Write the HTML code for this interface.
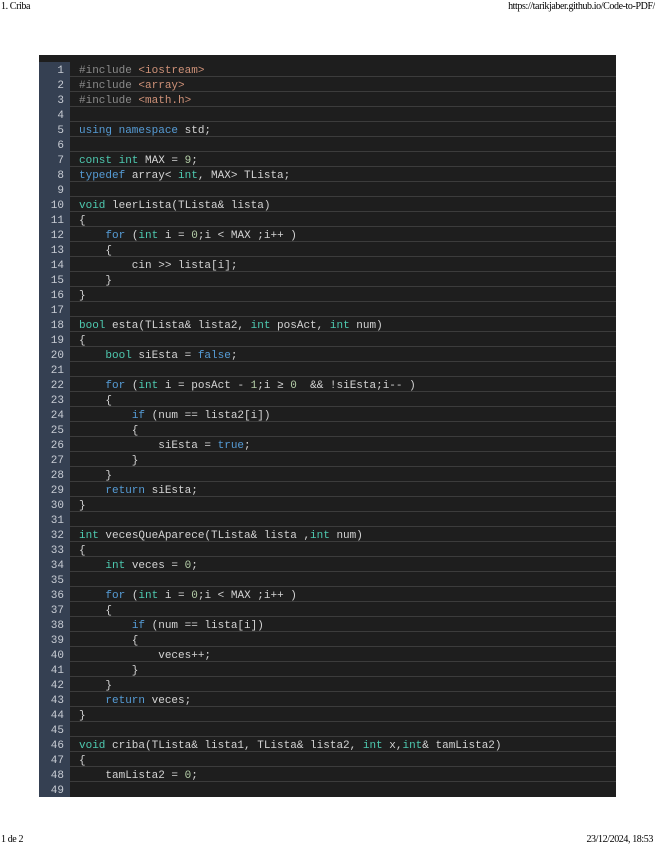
<!DOCTYPE html>
<html><head><meta charset="utf-8"><style>
body{margin:0;width:655px;height:848px;background:#fff;position:relative;overflow:hidden;font-family:"Liberation Serif",serif;}
.hd{position:absolute;font-size:10px;color:#000;letter-spacing:-0.4px}
.box{position:absolute;left:39px;top:55px;width:577px;height:742px;background:#1e1e1e;padding-top:7px;box-sizing:border-box}
.r{height:15px;display:flex;border-bottom:1px solid #3c3c3c;box-sizing:border-box;font-family:"Liberation Mono","DejaVu Sans Mono",monospace;font-size:11px;line-height:15px;color:#d4d4d4;white-space:pre}
.r:last-child{border-bottom:none}
.n{width:31px;background:#354052;color:#c8ccd4;text-align:right;padding-right:6px;box-sizing:border-box;flex:none}
.n,.c{position:relative;top:2px}
.n{top:0;padding-top:2px;height:15px;line-height:15px}
.c{padding-left:9px}
.k{color:#569cd6}.t{color:#4ec9b0}.p{color:#8a8a8a}.s{color:#ce9178}.m{color:#b5cea8}
</style></head><body>
<div class="hd" style="left:1px;top:1px">1. Criba</div>
<div class="hd" style="right:0;top:1px">https://tarikjaber.github.io/Code-to-PDF/</div>
<div class="hd" style="left:1px;top:834px">1 de 2</div>
<div class="hd" style="right:2px;top:834px">23/12/2024, 18:53</div>
<div class="box">
<div class="r"><div class="n">1</div><div class="c"><span class="p">#include </span><span class="s">&lt;iostream&gt;</span></div></div>
<div class="r"><div class="n">2</div><div class="c"><span class="p">#include </span><span class="s">&lt;array&gt;</span></div></div>
<div class="r"><div class="n">3</div><div class="c"><span class="p">#include </span><span class="s">&lt;math.h&gt;</span></div></div>
<div class="r"><div class="n">4</div><div class="c"></div></div>
<div class="r"><div class="n">5</div><div class="c"><span class="k">using namespace</span> std;</div></div>
<div class="r"><div class="n">6</div><div class="c"></div></div>
<div class="r"><div class="n">7</div><div class="c"><span class="t">const int</span> MAX = <span class="m">9</span>;</div></div>
<div class="r"><div class="n">8</div><div class="c"><span class="k">typedef</span> array&lt; <span class="t">int</span>, MAX&gt; TLista;</div></div>
<div class="r"><div class="n">9</div><div class="c"></div></div>
<div class="r"><div class="n">10</div><div class="c"><span class="t">void</span> leerLista(TLista&amp; lista)</div></div>
<div class="r"><div class="n">11</div><div class="c">{</div></div>
<div class="r"><div class="n">12</div><div class="c">    <span class="k">for</span> (<span class="t">int</span> i = <span class="m">0</span>;i &lt; MAX ;i++ )</div></div>
<div class="r"><div class="n">13</div><div class="c">    {</div></div>
<div class="r"><div class="n">14</div><div class="c">        cin &gt;&gt; lista[i];</div></div>
<div class="r"><div class="n">15</div><div class="c">    }</div></div>
<div class="r"><div class="n">16</div><div class="c">}</div></div>
<div class="r"><div class="n">17</div><div class="c"></div></div>
<div class="r"><div class="n">18</div><div class="c"><span class="t">bool</span> esta(TLista&amp; lista2, <span class="t">int</span> posAct, <span class="t">int</span> num)</div></div>
<div class="r"><div class="n">19</div><div class="c">{</div></div>
<div class="r"><div class="n">20</div><div class="c">    <span class="t">bool</span> siEsta = <span class="k">false</span>;</div></div>
<div class="r"><div class="n">21</div><div class="c"></div></div>
<div class="r"><div class="n">22</div><div class="c">    <span class="k">for</span> (<span class="t">int</span> i = posAct - <span class="m">1</span>;i ≥ <span class="m">0</span>  &amp;&amp; !siEsta;i-- )</div></div>
<div class="r"><div class="n">23</div><div class="c">    {</div></div>
<div class="r"><div class="n">24</div><div class="c">        <span class="k">if</span> (num == lista2[i])</div></div>
<div class="r"><div class="n">25</div><div class="c">        {</div></div>
<div class="r"><div class="n">26</div><div class="c">            siEsta = <span class="k">true</span>;</div></div>
<div class="r"><div class="n">27</div><div class="c">        }</div></div>
<div class="r"><div class="n">28</div><div class="c">    }</div></div>
<div class="r"><div class="n">29</div><div class="c">    <span class="k">return</span> siEsta;</div></div>
<div class="r"><div class="n">30</div><div class="c">}</div></div>
<div class="r"><div class="n">31</div><div class="c"></div></div>
<div class="r"><div class="n">32</div><div class="c"><span class="t">int</span> vecesQueAparece(TLista&amp; lista ,<span class="t">int</span> num)</div></div>
<div class="r"><div class="n">33</div><div class="c">{</div></div>
<div class="r"><div class="n">34</div><div class="c">    <span class="t">int</span> veces = <span class="m">0</span>;</div></div>
<div class="r"><div class="n">35</div><div class="c"></div></div>
<div class="r"><div class="n">36</div><div class="c">    <span class="k">for</span> (<span class="t">int</span> i = <span class="m">0</span>;i &lt; MAX ;i++ )</div></div>
<div class="r"><div class="n">37</div><div class="c">    {</div></div>
<div class="r"><div class="n">38</div><div class="c">        <span class="k">if</span> (num == lista[i])</div></div>
<div class="r"><div class="n">39</div><div class="c">        {</div></div>
<div class="r"><div class="n">40</div><div class="c">            veces++;</div></div>
<div class="r"><div class="n">41</div><div class="c">        }</div></div>
<div class="r"><div class="n">42</div><div class="c">    }</div></div>
<div class="r"><div class="n">43</div><div class="c">    <span class="k">return</span> veces;</div></div>
<div class="r"><div class="n">44</div><div class="c">}</div></div>
<div class="r"><div class="n">45</div><div class="c"></div></div>
<div class="r"><div class="n">46</div><div class="c"><span class="t">void</span> criba(TLista&amp; lista1, TLista&amp; lista2, <span class="t">int</span> x,<span class="t">int</span>&amp; tamLista2)</div></div>
<div class="r"><div class="n">47</div><div class="c">{</div></div>
<div class="r"><div class="n">48</div><div class="c">    tamLista2 = <span class="m">0</span>;</div></div>
<div class="r"><div class="n">49</div><div class="c"></div></div>
</div>
</body></html>
